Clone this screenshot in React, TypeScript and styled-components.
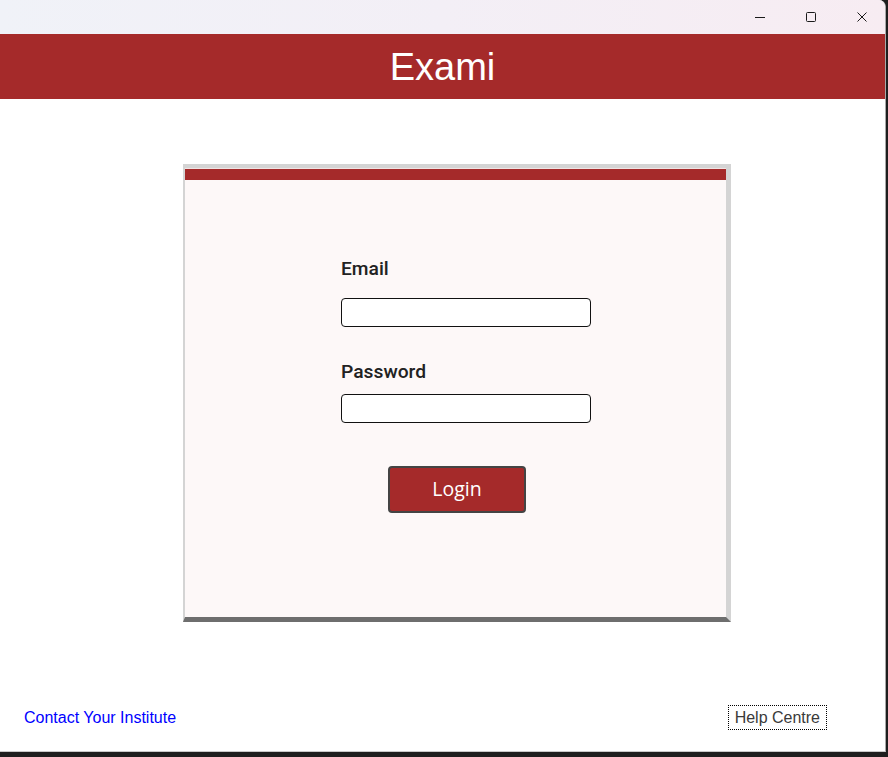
import React from 'react'
import styled, { createGlobalStyle } from 'styled-components'

const brand = '#a52a2a'

const GlobalStyle = createGlobalStyle`
  html, body {
    margin: 0;
    padding: 0;
    background: #1e1e1e;
    font-family: 'Liberation Sans', Arial, sans-serif;
  }
  * {
    box-sizing: border-box;
  }
`

const Screen = styled.div`
  width: 888px;
  height: 757px;
  overflow: hidden;
  background: #1e1e1e;
`

const Window = styled.div`
  width: 886px;
  height: 752px;
  display: flex;
  flex-direction: column;
  background: #fff;
  border-right: 1px solid #a8a8a8;
  border-bottom: 1px solid #c8c8c8;
  border-top-right-radius: 7px;
  overflow: hidden;
`

const TitleBar = styled.div`
  height: 34px;
  flex-shrink: 0;
  display: flex;
  justify-content: flex-end;
  gap: 5px;
  background: linear-gradient(90deg, #f0f2f8 0%, #f3eff6 50%, #f7ecf2 100%);
`

const WinButton = styled.div`
  width: 46px;
  height: 34px;
  display: flex;
  align-items: center;
  justify-content: center;
  color: #1a1a1a;
`

const Header = styled.header`
  height: 65px;
  flex-shrink: 0;
  display: flex;
  align-items: center;
  justify-content: center;
  background: ${brand};
  color: #fff;
  font-size: 38px;
  padding-top: 1px;
`

const Main = styled.main`
  flex: 1;
  padding: 65px 0 0 183px;
`

const Card = styled.section`
  width: 548px;
  height: 458px;
  background: #fdf8f8;
  border-style: solid;
  border-color: #d4d4d4;
  border-width: 4px 5px 5px 2px;
  border-bottom-color: #6e6e6e;
  display: flex;
  flex-direction: column;
`

const CardBar = styled.div`
  height: 12px;
  background: ${brand};
  border-top: 1px solid #f1e4e4;
`

const Form = styled.form`
  display: flex;
  flex-direction: column;
  align-items: flex-start;
  padding: 78px 0 0 156px;
  font-family: 'Roboto Medium', Roboto, 'Noto Sans', sans-serif;
`

const Label = styled.label<{ $gap: number }>`
  font-size: 19.2px;
  font-weight: 500;
  color: #222;
  line-height: 22.5px;
  margin-bottom: ${({ $gap }) => $gap}px;
`

const Input = styled.input<{ $last?: boolean }>`
  width: 250px;
  height: 29px;
  border: 1px solid #111;
  border-radius: 4px;
  background: #fff;
  outline: none;
  margin-bottom: ${({ $last }) => ($last ? 43 : 34)}px;
`

const ButtonRow = styled.div`
  display: flex;
  justify-content: center;
  padding-left: 3px;
`

const LoginButton = styled.button`
  width: 138px;
  height: 47px;
  background: ${brand};
  border: 2px solid #444;
  border-radius: 4px;
  color: #fff;
  font-family: 'Open Sans', 'Noto Sans', sans-serif;
  font-size: 19.5px;
  padding: 0 0 2px;
`

const Footer = styled.footer`
  display: flex;
  align-items: center;
  justify-content: space-between;
  padding: 0 58px 21px 24px;
  font-size: 16px;
`

const ContactLink = styled.a`
  color: #0000ff;
  text-decoration: none;
`

const HelpBox = styled.div`
  border: 1px dotted #000;
  color: #3a3a3a;
  padding: 3px 6px 3px 6px;
  line-height: 17px;
`

const MinIcon = () => (
  <svg width="10" height="10" viewBox="0 0 10 10">
    <path d="M0 5.5h10" stroke="currentColor" strokeWidth="1" />
  </svg>
)

const MaxIcon = () => (
  <svg width="10" height="10" viewBox="0 0 10 10">
    <rect x="0.5" y="0.5" width="9" height="9" rx="1" fill="none" stroke="currentColor" strokeWidth="1" />
  </svg>
)

const CloseIcon = () => (
  <svg width="10" height="10" viewBox="0 0 10 10">
    <path d="M0.5 0.5l9 9M9.5 0.5l-9 9" stroke="currentColor" strokeWidth="1" />
  </svg>
)

export default function App() {
  return (
    <Screen>
      <GlobalStyle />
      <Window>
        <TitleBar>
          <WinButton>
            <MinIcon />
          </WinButton>
          <WinButton>
            <MaxIcon />
          </WinButton>
          <WinButton>
            <CloseIcon />
          </WinButton>
        </TitleBar>
        <Header>Exami</Header>
        <Main>
          <Card>
            <CardBar />
            <Form onSubmit={(e) => e.preventDefault()}>
              <Label htmlFor="email" $gap={17}>
                Email
              </Label>
              <Input id="email" type="email" />
              <Label htmlFor="password" $gap={11}>
                Password
              </Label>
              <Input id="password" type="password" $last />
            </Form>
            <ButtonRow>
              <LoginButton type="submit">Login</LoginButton>
            </ButtonRow>
          </Card>
        </Main>
        <Footer>
          <ContactLink href="#">Contact Your Institute</ContactLink>
          <HelpBox>Help Centre</HelpBox>
        </Footer>
      </Window>
    </Screen>
  )
}
